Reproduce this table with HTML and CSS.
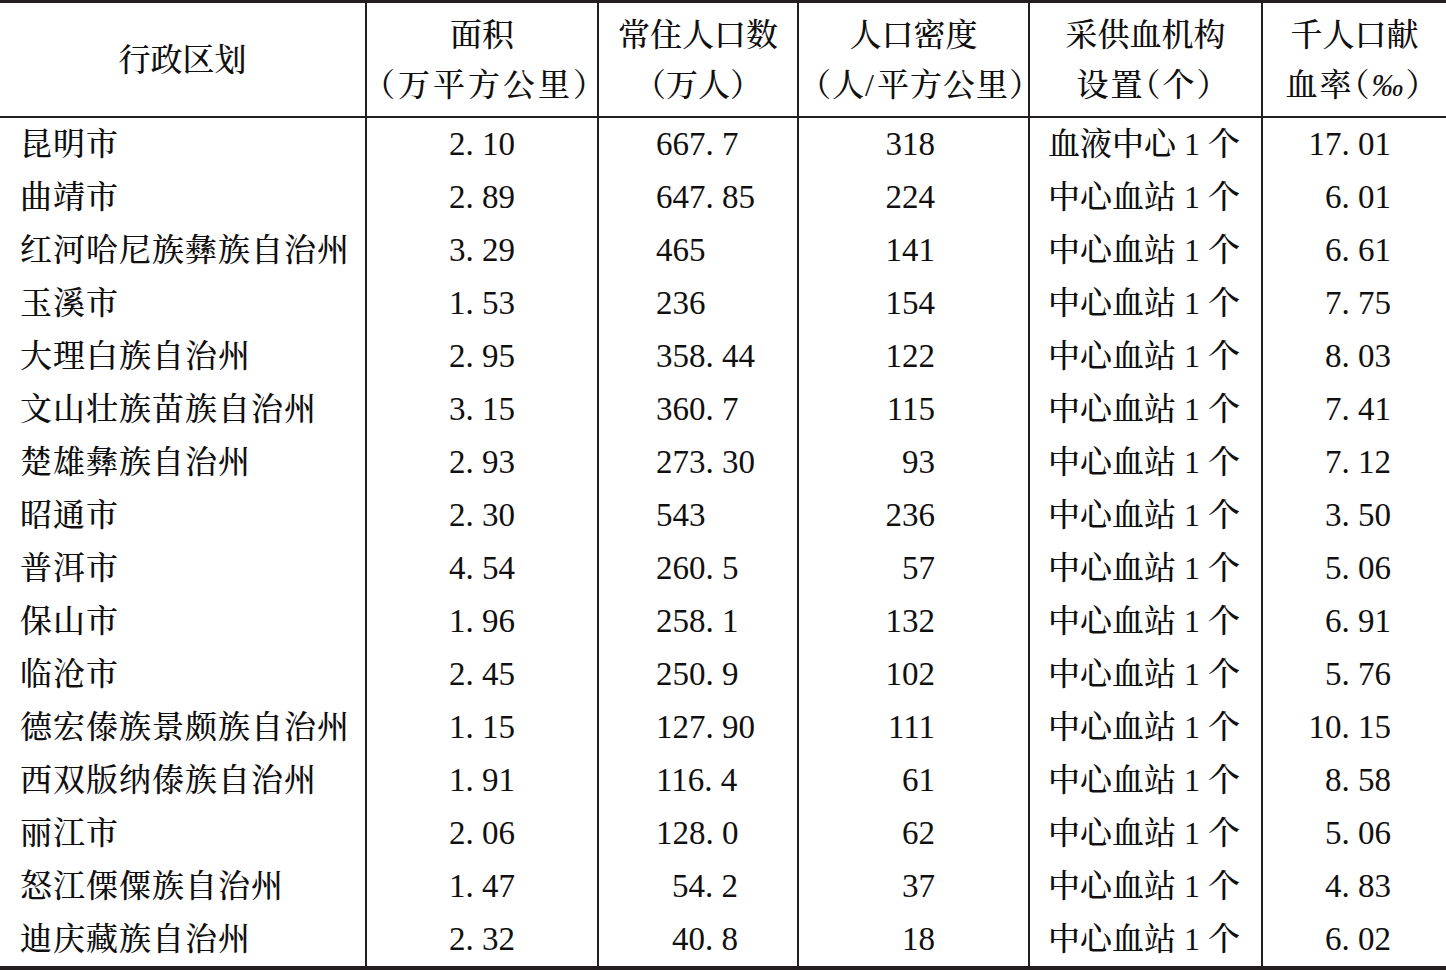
FILE: index.html
```html
<!DOCTYPE html>
<html lang="zh-CN">
<head>
<meta charset="utf-8">
<title>云南省采供血机构</title>
<link rel="stylesheet" href="styles.css">
</head>
<body>
<table class="data">
  <colgroup>
    <col class="c0"><col class="c1"><col class="c2"><col class="c3"><col class="c4"><col class="c5">
  </colgroup>
  <thead>
    <tr>
      <th>行政区划</th>
      <th>面积<br><span class="wide">（万平方公里）</span></th>
      <th>常住人口数<br><span class="paren">（万人）</span></th>
      <th>人口密度<br><span class="dense">（人<span class="slash">/</span>平方公里）</span></th>
      <th>采供血机构<br><span class="half">设置（个）</span></th>
      <th>千人口献<br><span class="half">血率（<span class="permil">‰</span>）</span></th>
    </tr>
  </thead>
  <tbody>
    <tr><td class="name">昆明市</td><td class="area">2. 10</td><td class="pop">667. 7</td><td class="dens">318</td><td class="org">血液中心 1 个</td><td class="rate">17. 01</td></tr>
    <tr><td class="name">曲靖市</td><td class="area">2. 89</td><td class="pop">647. 85</td><td class="dens">224</td><td class="org">中心血站 1 个</td><td class="rate">6. 01</td></tr>
    <tr><td class="name">红河哈尼族彝族自治州</td><td class="area">3. 29</td><td class="pop">465</td><td class="dens">141</td><td class="org">中心血站 1 个</td><td class="rate">6. 61</td></tr>
    <tr><td class="name">玉溪市</td><td class="area">1. 53</td><td class="pop">236</td><td class="dens">154</td><td class="org">中心血站 1 个</td><td class="rate">7. 75</td></tr>
    <tr><td class="name">大理白族自治州</td><td class="area">2. 95</td><td class="pop">358. 44</td><td class="dens">122</td><td class="org">中心血站 1 个</td><td class="rate">8. 03</td></tr>
    <tr><td class="name">文山壮族苗族自治州</td><td class="area">3. 15</td><td class="pop">360. 7</td><td class="dens">115</td><td class="org">中心血站 1 个</td><td class="rate">7. 41</td></tr>
    <tr><td class="name">楚雄彝族自治州</td><td class="area">2. 93</td><td class="pop">273. 30</td><td class="dens">93</td><td class="org">中心血站 1 个</td><td class="rate">7. 12</td></tr>
    <tr><td class="name">昭通市</td><td class="area">2. 30</td><td class="pop">543</td><td class="dens">236</td><td class="org">中心血站 1 个</td><td class="rate">3. 50</td></tr>
    <tr><td class="name">普洱市</td><td class="area">4. 54</td><td class="pop">260. 5</td><td class="dens">57</td><td class="org">中心血站 1 个</td><td class="rate">5. 06</td></tr>
    <tr><td class="name">保山市</td><td class="area">1. 96</td><td class="pop">258. 1</td><td class="dens">132</td><td class="org">中心血站 1 个</td><td class="rate">6. 91</td></tr>
    <tr><td class="name">临沧市</td><td class="area">2. 45</td><td class="pop">250. 9</td><td class="dens">102</td><td class="org">中心血站 1 个</td><td class="rate">5. 76</td></tr>
    <tr><td class="name">德宏傣族景颇族自治州</td><td class="area">1. 15</td><td class="pop">127. 90</td><td class="dens">111</td><td class="org">中心血站 1 个</td><td class="rate">10. 15</td></tr>
    <tr><td class="name">西双版纳傣族自治州</td><td class="area">1. 91</td><td class="pop">116. 4</td><td class="dens">61</td><td class="org">中心血站 1 个</td><td class="rate">8. 58</td></tr>
    <tr><td class="name">丽江市</td><td class="area">2. 06</td><td class="pop">128. 0</td><td class="dens">62</td><td class="org">中心血站 1 个</td><td class="rate">5. 06</td></tr>
    <tr><td class="name">怒江傈僳族自治州</td><td class="area">1. 47</td><td class="pop"><span class="lead">54. 2</span></td><td class="dens">37</td><td class="org">中心血站 1 个</td><td class="rate">4. 83</td></tr>
    <tr><td class="name">迪庆藏族自治州</td><td class="area">2. 32</td><td class="pop"><span class="lead">40. 8</span></td><td class="dens">18</td><td class="org">中心血站 1 个</td><td class="rate">6. 02</td></tr>
  </tbody>
</table>
</body>
</html>
```
FILE: styles.css
```css
html, body {
  margin: 0;
  padding: 0;
  background: #ffffff;
}

body {
  color: #111011;
  font-family: "Liberation Serif", "Noto Serif CJK SC", "Noto Sans CJK SC", serif;
  font-size: 32px;
  font-weight: 500;
}

.data {
  width: 1446px;
  border-collapse: collapse;
  table-layout: fixed;
  border-top: 3px solid #231f20;
  border-bottom: 4px solid #231f20;
}

.c0 { width: 366px; }
.c1 { width: 232px; }
.c2 { width: 200px; }
.c3 { width: 231px; }
.c4 { width: 233px; }
.c5 { width: 184px; }

.data th {
  font-weight: 500;
  height: 113px;
  padding: 0;
  line-height: 50px;
  text-align: center;
  vertical-align: middle;
  white-space: nowrap;
  border-bottom: 2px solid #231f20;
}

.data td {
  height: 53px;
  line-height: 53px;
  padding: 0;
  white-space: nowrap;
  vertical-align: middle;
}

.data th + th,
.data td + td {
  border-left: 2px solid #231f20;
}

.wide { letter-spacing: 3px; margin-left: -4px; }
.dense { letter-spacing: 1px; }
.paren { letter-spacing: 0; }
.half { font-feature-settings: "halt" 1; letter-spacing: 2px; }
.slash { font-family: "Liberation Serif", serif; margin: 0 2px 0 0; }
.permil { font-style: italic; }

.data td.name { padding-left: 20px; letter-spacing: 1px; }
.data td.area { text-align: center; font-size: 33px; }
.data td.pop { padding-left: 57px; font-size: 33px; }
.lead { padding-left: 16px; }
.data td.dens { text-align: right; padding-right: 93px; font-size: 33px; }
.data td.org { padding-left: 18px; }
.data td.rate { text-align: right; padding-right: 55px; font-size: 33px; }
```
